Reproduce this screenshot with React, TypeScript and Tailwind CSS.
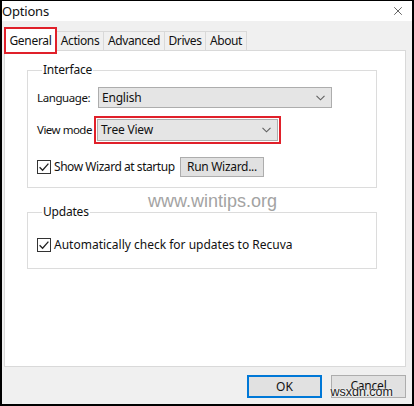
import { X } from "lucide-react";

const font = { fontFamily: '"Noto Sans", "Segoe UI", sans-serif' };

function Chevron() {
  return (
    <svg width="9" height="6" viewBox="0 0 9 6" className="shrink-0">
      <path d="M0.5 0.8 L4.5 4.8 L8.5 0.8" fill="none" stroke="#5f5f5f" strokeWidth="1.1" />
    </svg>
  );
}

function Combo({ value, className }: { value: string; className: string }) {
  return (
    <div
      className={`flex items-center justify-between border border-[#adadad] bg-[#e5e5e5] pl-[3px] pr-[6px] text-[12px] tracking-[-0.2px] text-[#111] ${className}`}
    >
      <span>{value}</span>
      <Chevron />
    </div>
  );
}

function CheckBox() {
  return (
    <svg width="14" height="14" viewBox="0 0 14 14" className="shrink-0">
      <rect x="0.5" y="0.5" width="13" height="13" fill="#fff" stroke="#333" />
      <path d="M2.6 7.2 L5.6 10.2 L11.4 3.6" fill="none" stroke="#222" strokeWidth="1.3" />
    </svg>
  );
}

function Group({ title, children, className }: { title: string; children: React.ReactNode; className: string }) {
  return (
    <fieldset className={`border border-[#dcdcdc] pl-[9px] ${className}`}>
      <legend className="ml-[5px] px-[1px] text-[12px] leading-[14px] tracking-[-0.2px] text-[#111]">{title}</legend>
      {children}
    </fieldset>
  );
}

const tabs = [
  { name: "Actions", w: "w-[48px]" },
  { name: "Advanced", w: "w-[62px]" },
  { name: "Drives", w: "w-[42px]" },
  { name: "About", w: "w-[42px]" },
];

export default function App() {
  return (
    <div
      style={font}
      className="flex h-[406px] w-[414px] flex-col whitespace-nowrap border-t border-r-2 border-b-2 border-l-2 border-black bg-[#f0f0f0] text-[#111]"
    >
      {/* title bar */}
      <div className="flex h-[20px] shrink-0 items-center justify-between bg-white pr-[7px]">
        <span className="text-[13px] leading-none tracking-[-0.2px]">Options</span>
        <X size={14} strokeWidth={1.2} className="text-[#222]" />
      </div>

      {/* tab strip */}
      <div className="ml-[2px] mt-[6px] flex h-[23px] items-end">
        <div className="relative z-10 mb-[-4px] flex h-[27px] w-[53px] items-center justify-center border-2 border-[#e0202a] bg-white text-[12px] tracking-[-0.3px]">
          General
        </div>
        {tabs.map((t) => (
          <div
            key={t.name}
            className={`-ml-px flex h-[19px] ${t.w} items-center justify-center border border-b-0 border-[#d9d9d9] bg-[#f0f0f0] text-[12px] tracking-[-0.4px]`}
          >
            {t.name}
          </div>
        ))}
      </div>

      {/* page */}
      <div className="relative ml-[2px] h-[317px] w-[402px] border border-[#d9d9d9] bg-white">
        <Group title="Interface" className="ml-[22px] mt-[12px] w-[350px] pb-[10px]">
          <div className="mt-[10px] flex h-[21px] items-center">
            <span className="w-[57px] text-[11.5px] tracking-[-0.4px]">Language:</span>
            <Combo value="English" className="ml-[4px] h-[21px] w-[234px]" />
          </div>
          <div className="mt-[8px] flex h-[28px] items-center">
            <span className="w-[57px] text-[11.5px] tracking-[-0.5px]">View mode</span>
            <div className="border-2 border-[#e0202a] p-px">
              <Combo value="Tree View" className="h-[22px] w-[181px]" />
            </div>
          </div>
          <div className="mt-[13px] flex h-[20px] items-center">
            <div className="flex w-[143px] items-center">
              <CheckBox />
              <span className="ml-[3px] text-[12px] tracking-[-0.45px]">Show Wizard at startup</span>
            </div>
            <div className="flex h-[20px] w-[84px] items-center justify-center border border-[#adadad] bg-[#e1e1e1] text-[12px] tracking-[-0.3px]">
              Run Wizard...
            </div>
          </div>
        </Group>

        <Group title="Updates" className="ml-[22px] mt-[17px] w-[350px] pb-[16px]">
          <div className="mt-[19px] flex h-[14px] items-center">
            <CheckBox />
            <span className="ml-[3px] text-[12px]">Automatically check for updates to Recuva</span>
          </div>
        </Group>

        <span
          className="absolute left-[143px] top-[141px] text-[18px] leading-none text-[#a3a3a3]"
          style={{ fontFamily: '"Liberation Sans", Arial, sans-serif' }}
        >
          www.wintips.org
        </span>
      </div>

      {/* dialog buttons */}
      <div className="relative mt-[8px] flex justify-end gap-[9px] pr-[6px]">
        <div className="flex h-[23px] w-[75px] items-center justify-center border-2 border-[#0078d7] bg-[#e1e1e1] text-[12px]">
          OK
        </div>
        <div className="flex h-[23px] w-[75px] items-start justify-center border border-[#adadad] bg-[#e1e1e1] pt-[1px] text-[12px] tracking-[-0.2px]">
          Cancel
        </div>
        <span
          className="absolute right-[19px] top-[11px] text-[12.5px] leading-none text-[#222] [text-shadow:0_0_2px_#fff,0_0_2px_#fff]"
          style={{ fontFamily: '"Liberation Sans", Arial, sans-serif' }}
        >
          wsxdn.com
        </span>
      </div>
    </div>
  );
}
